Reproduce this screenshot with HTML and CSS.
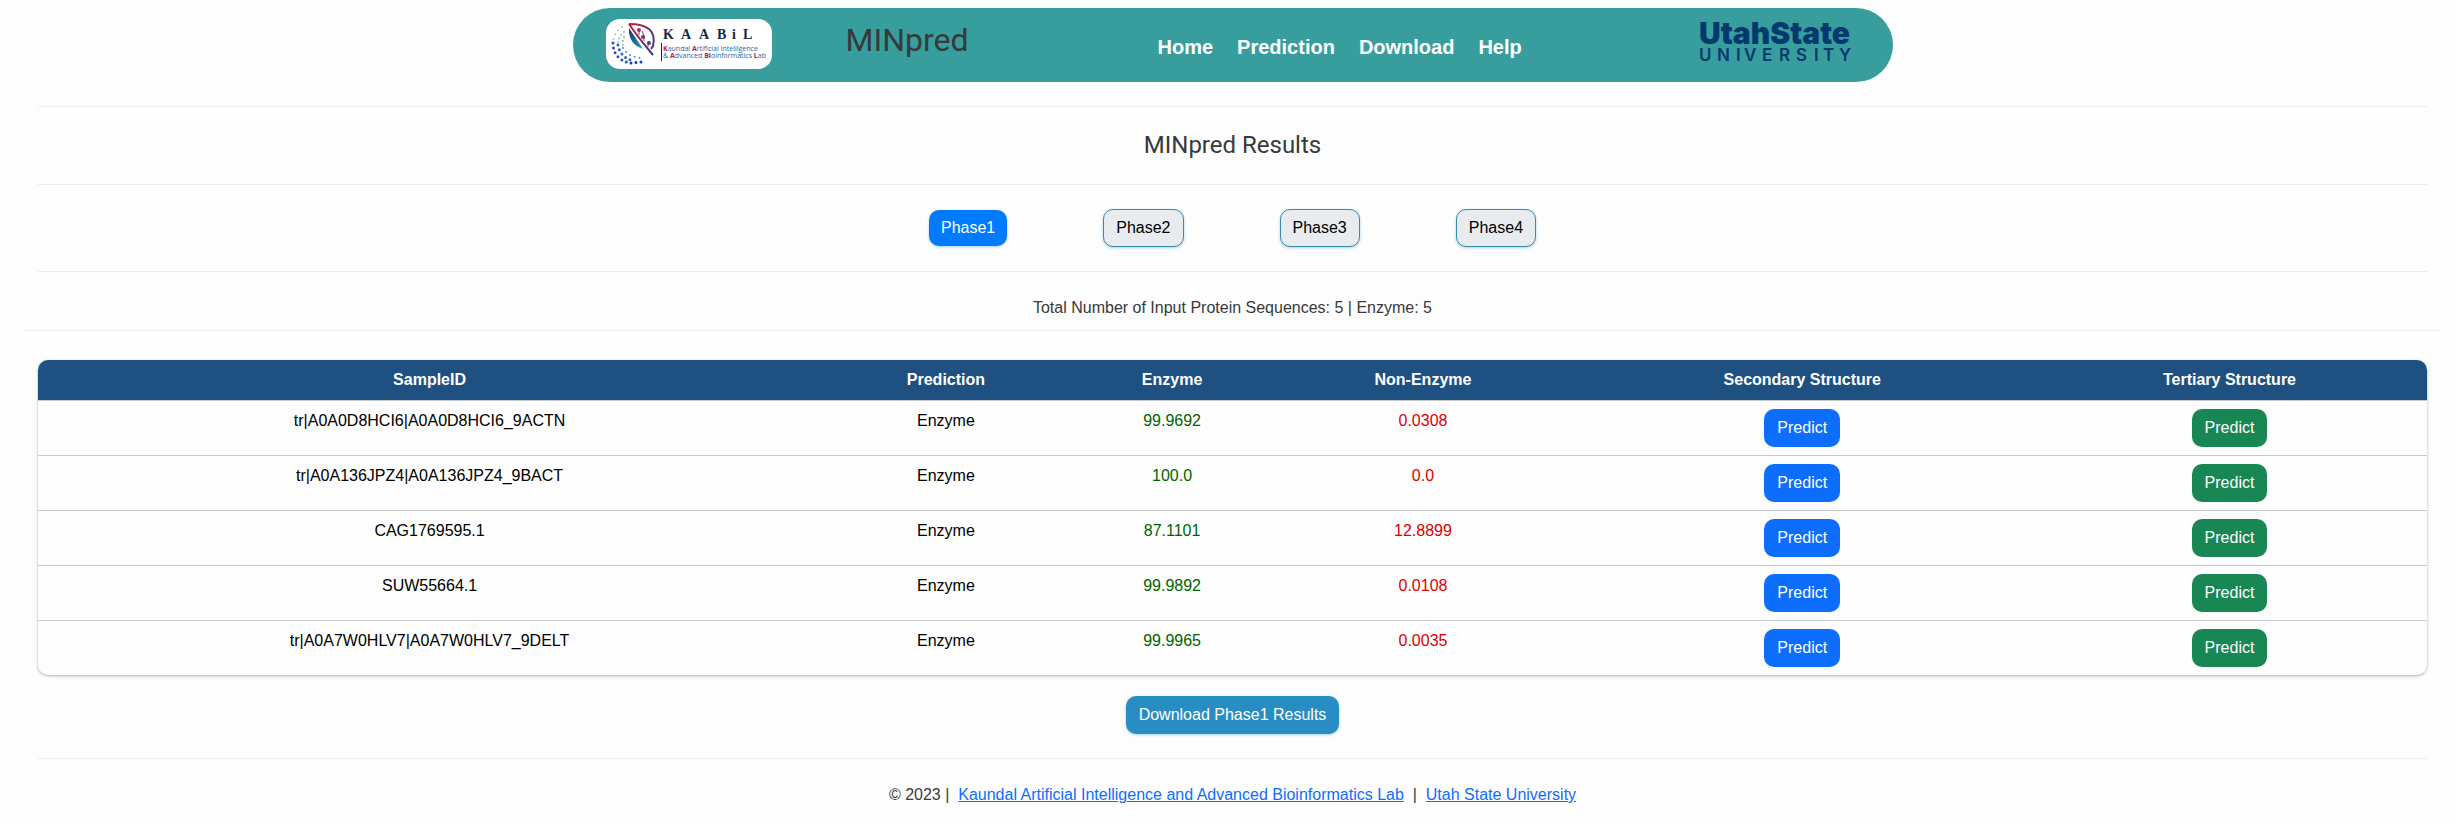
FILE: index.html
```html
<!DOCTYPE html>
<html lang="en">
<head>
<meta charset="utf-8">
<title>MINpred Results</title>
<link rel="stylesheet" href="styles.css">
</head>
<body>
<header class="navbar">
  <a class="lab-logo" href="#" aria-label="KAABiL">
    <svg width="166" height="50" viewBox="0 0 166 50">
      <defs>
        <linearGradient id="leaf" x1="0" y1="0" x2="1" y2="1"><stop offset="0" stop-color="#14366b"/><stop offset="1" stop-color="#2a9bd0"/></linearGradient>
        <linearGradient id="edge" x1="0" y1="0" x2="1" y2="1"><stop offset="0" stop-color="#d0183c"/><stop offset="1" stop-color="#2a3f86"/></linearGradient>
      </defs>
      <g fill="none" stroke-linecap="round">
        <path d="M16 8Q8 14 7 22" stroke="#a9bfd8" stroke-width="2" stroke-dasharray="0 5"/>
        <path d="M18 13Q12 18 12 25" stroke="#9dbccb" stroke-width="2" stroke-dasharray="0 4"/>
        <path d="M18 18Q16 22 17 29" stroke="#8fb5c0" stroke-width="2" stroke-dasharray="0 4"/>
        <path d="M7 24Q7 40 24 44" stroke="#2f50b8" stroke-width="3" stroke-dasharray="0 5"/>
        <path d="M12 26Q14 38 27 42" stroke="#3560c8" stroke-width="3" stroke-dasharray="0 5"/>
        <path d="M17 29Q21 37 34 39" stroke="#4f91bd" stroke-width="2" stroke-dasharray="0 5"/>
        <path d="M25 44L35 43" stroke="#1838c0" stroke-width="3" stroke-dasharray="0 5"/>
      </g>
      <path d="M23 9Q22 25 37 30Z" fill="url(#leaf)"/>
      <path d="M23 5Q31 17 47 36M23 5Q52 5 47 27L45 30" fill="none" stroke="url(#edge)" stroke-width="2"/>
      <path d="M33 16V10M38 22V17L36 12M42 28V24" fill="none" stroke="#a03058"/>
      <circle cx="33" cy="11" r="2" fill="#b82848"/><circle cx="37" cy="18" r="2" fill="#6b3c78"/><circle cx="43" cy="24" r="2" fill="#384888"/>
      <path d="M55.500 24V42" stroke="#222"/>
      <text class="lab-name" y="20" x="57 75 93 111 126 137">KAABiL</text>
      <text class="lab-line" x="57" y="32"><tspan class="initial">K</tspan>aundal <tspan class="initial">A</tspan>rtificial Intelligence</text>
      <text class="lab-line" x="57" y="39">&amp; <tspan class="initial">A</tspan>dvanced <tspan class="initial">Bi</tspan>oinformatics <tspan class="initial">L</tspan>ab</text>
    </svg>
  </a>
  <h1 class="brand">MINpred</h1>
  <nav class="links">
    <a href="#">Home</a>
    <a href="#">Prediction</a>
    <a href="#">Download</a>
    <a href="#">Help</a>
  </nav>
  <a class="usu-logo" href="#" aria-label="Utah State University">
    <svg width="170" height="62" viewBox="0 0 170 62">
      <text class="usu-name" x="0" y="36">UtahState</text>
      <text class="usu-sub" y="53" x="0 18 37 45 63 80 97 115 124 140">UNIVERSITY</text>
    </svg>
  </a>
</header>
<main class="content">
  <hr>
  <h2 class="title">MINpred Results</h2>
  <hr>
  <div class="phases">
    <button class="btn phase active" type="button">Phase1</button>
    <button class="btn phase" type="button">Phase2</button>
    <button class="btn phase" type="button">Phase3</button>
    <button class="btn phase" type="button">Phase4</button>
  </div>
  <hr>
  <p class="summary">Total Number of Input Protein Sequences: 5 | Enzyme: 5</p>
  <hr class="wide">
  <table class="results">
    <thead>
      <tr><th>SampleID</th><th>Prediction</th><th>Enzyme</th><th>Non-Enzyme</th><th>Secondary Structure</th><th>Tertiary Structure</th></tr>
    </thead>
    <tbody>
      <tr><td>tr|A0A0D8HCI6|A0A0D8HCI6_9ACTN</td><td>Enzyme</td><td class="pos">99.9692</td><td class="neg">0.0308</td><td><button class="btn blue" type="button">Predict</button></td><td><button class="btn green" type="button">Predict</button></td></tr>
      <tr><td>tr|A0A136JPZ4|A0A136JPZ4_9BACT</td><td>Enzyme</td><td class="pos">100.0</td><td class="neg">0.0</td><td><button class="btn blue" type="button">Predict</button></td><td><button class="btn green" type="button">Predict</button></td></tr>
      <tr><td>CAG1769595.1</td><td>Enzyme</td><td class="pos">87.1101</td><td class="neg">12.8899</td><td><button class="btn blue" type="button">Predict</button></td><td><button class="btn green" type="button">Predict</button></td></tr>
      <tr><td>SUW55664.1</td><td>Enzyme</td><td class="pos">99.9892</td><td class="neg">0.0108</td><td><button class="btn blue" type="button">Predict</button></td><td><button class="btn green" type="button">Predict</button></td></tr>
      <tr><td>tr|A0A7W0HLV7|A0A7W0HLV7_9DELT</td><td>Enzyme</td><td class="pos">99.9965</td><td class="neg">0.0035</td><td><button class="btn blue" type="button">Predict</button></td><td><button class="btn green" type="button">Predict</button></td></tr>
    </tbody>
  </table>
  <div class="download"><button class="btn save" type="button">Download Phase1 Results</button></div>
  <hr>
</main>
<footer class="footer">© 2023 |&nbsp; <a href="#">Kaundal Artificial Intelligence and Advanced Bioinformatics Lab</a> &nbsp;|&nbsp; <a href="#">Utah State University</a></footer>
</body>
</html>
```
FILE: styles.css
```css
* { box-sizing: border-box; }
body {
  margin: 0;
  padding: 8px 29px 0 38px;
  background: #fdfdfd;
  color: #373a3c;
  font: 16px/24px "Liberation Sans", Arial, sans-serif;
}
.navbar {
  display: grid;
  grid-template-columns: 240px 312px 1fr 194px;
  max-width: 1320px;
  height: 74px;
  margin: 0 auto;
  padding-left: 33px;
  border-radius: 37px;
  background: #379e9d;
}
.lab-logo {
  align-self: start;
  width: 166px;
  height: 50px;
  margin-top: 11px;
  border-radius: 14px;
  background: #fff;
}
.lab-logo svg, .usu-logo svg { display: block; }
.lab-name { font: bold 14px "Liberation Serif", serif; fill: #14274b; }
.lab-line { font: 7px "Open Sans", sans-serif; fill: #2d62a8; }
.initial { font-weight: bold; fill: #b01848; }
.brand {
  margin: 12px 0 0;
  font: 400 32px/40px Roboto, sans-serif;
  color: #373a3c;
}
.links { display: flex; align-items: center; gap: 24px; padding-top: 4px; }
.links a { color: #fff; font-size: 20px; font-weight: bold; text-decoration: none; }
.usu-name { font: 900 30px Inter, sans-serif; fill: #03396d; }
.usu-sub { font: 600 17px Inter, sans-serif; fill: #03396d; }
hr { height: 1px; margin: 24px 0; border: 0; background: #ebecec; }
.title {
  margin: 0;
  font: 400 24px/29px Roboto, sans-serif;
  text-align: center;
}
.phases { display: flex; justify-content: center; align-items: center; gap: 96px; }
.btn {
  height: 38px;
  padding: 0 12px;
  border: 1px solid transparent;
  border-radius: 10px;
  color: #fff;
  font: inherit;
  cursor: pointer;
}
.phase {
  border-color: #3d88b0;
  background: #e9ecef;
  color: #000;
  box-shadow: 0 1px 3px #288dc266;
}
.phase.active { height: 36px; border: 0; background: #007bff; color: #fff; }
.summary { margin: 0; text-align: center; }
.wide { margin: 10px -14px 29px; }
.results {
  width: 100%;
  border-collapse: separate;
  border-spacing: 0;
  border-radius: 10px;
  overflow: hidden;
  box-shadow: 0 1px 3px #00000050;
  color: #000;
  text-align: center;
}
.results th { padding: 8px; background: #1e5181; color: #fff; }
.results td { padding: 8px; border-top: 1px solid #c6c7c8; vertical-align: top; }
.results .btn { display: block; margin: 0 auto; }
.results .pos { color: #006400; }
.results .neg { color: #dc0000; }
.blue { background: #0d6efd; }
.green { background: #198754; }
.download { margin-top: 21px; text-align: center; }
.save { display: block; margin: 0 auto; background: #288dc2; box-shadow: 0 1px 3px #288dc266; }
.footer { text-align: center; }
.footer a { color: #0d6efd; }
```
